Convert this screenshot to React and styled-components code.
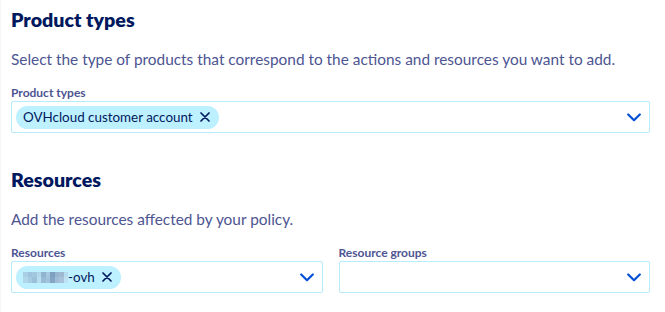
import React from "react";
import styled, { createGlobalStyle } from "styled-components";

const GlobalStyle = createGlobalStyle`
  html, body {
    margin: 0;
    padding: 0;
    background: #ffffff;
  }
  body {
    font-family: Lato, "Liberation Sans", sans-serif;
    color: #4d5592;
  }
`;

const Page = styled.div`
  width: 665px;
  height: 312px;
  box-sizing: border-box;
  padding: 7px 15px 0 10px;
  border-left: 1px solid #f6f6f6;
  overflow: hidden;
`;

const Section = styled.section`
  margin-bottom: ${(p) => p.gap || 0}px;
`;

const Heading = styled.h2`
  margin: 0;
  font-size: 19.6px;
  line-height: 26px;
  font-weight: 800;
  color: #00185e;
`;

const Description = styled.p`
  margin: 15px 0 0;
  font-size: 15.4px;
  line-height: 22px;
  color: #4d5592;
`;

const Fields = styled.div`
  display: grid;
  grid-template-columns: ${(p) => (p.cols === 2 ? "1fr 1fr" : "1fr")};
  column-gap: 16px;
  margin-top: 16px;
`;

const Field = styled.div`
  display: flex;
  flex-direction: column;
`;

const Label = styled.label`
  font-size: 12px;
  line-height: 14px;
  font-weight: 700;
  color: #4d5592;
  margin-bottom: 1px;
`;

const SelectBox = styled.div`
  box-sizing: border-box;
  height: 32px;
  border: 1px solid #b7ecfb;
  border-radius: 2px;
  display: flex;
  align-items: center;
  padding: 0 8px 0 4px;
  background: #ffffff;
`;

const Chips = styled.div`
  flex: 1;
  display: flex;
  align-items: center;
  gap: 4px;
`;

const Chip = styled.span`
  display: inline-flex;
  align-items: center;
  height: 23px;
  padding: 0 9px 0 7px;
  border-radius: 12px;
  background: #bef1ff;
  color: #00185e;
  font-size: 13.4px;
  gap: 7px;
`;

const Masked = styled.span`
  display: inline-flex;
  align-items: center;
`;

const Blur = styled.span`
  display: inline-grid;
  grid-template-columns: repeat(10, 4.5px);
  grid-template-rows: repeat(2, 5.5px);
`;

const Px = styled.span`
  background: ${(p) => p.c};
`;

const Chevron = styled.svg`
  flex: none;
  width: 14px;
  height: 9px;
`;

const blurColors = [
  "#a9cfe6", "#9ec4dd", "#a2c8e0", "#b2d8ec", "#8fb4d0", "#a7c9e0", "#7f9fc0", "#98b5d0", "#9eb8d2", "#b5dcef",
  "#b0d6ea", "#a6cbe2", "#9cc0da", "#b9def0", "#98bcd6", "#a3c3dc", "#86a5c5", "#a0bcd6", "#a8c2da", "#bde2f2",
];

function Close() {
  return (
    <svg width="10" height="10" viewBox="0 0 10 10">
      <path d="M1 1 L9 9 M9 1 L1 9" stroke="#00185e" strokeWidth="1.7" strokeLinecap="round" />
    </svg>
  );
}

function Down() {
  return (
    <Chevron viewBox="0 0 14 9">
      <path d="M1.2 1.5 L7 7.2 L12.8 1.5" fill="none" stroke="#0050d7" strokeWidth="2.2" strokeLinecap="round" strokeLinejoin="round" />
    </Chevron>
  );
}

function Select({ children }) {
  return (
    <SelectBox>
      <Chips>{children}</Chips>
      <Down />
    </SelectBox>
  );
}

export default function App() {
  return (
    <>
      <GlobalStyle />
      <Page>
        <Section gap={34}>
          <Heading>Product types</Heading>
          <Description>
            Select the type of products that correspond to the actions and resources you want to add.
          </Description>
          <Fields>
            <Field>
              <Label>Product types</Label>
              <Select>
                <Chip>
                  OVHcloud customer account <Close />
                </Chip>
              </Select>
            </Field>
          </Fields>
        </Section>
        <Section>
          <Heading>Resources</Heading>
          <Description>Add the resources affected by your policy.</Description>
          <Fields cols={2}>
            <Field>
              <Label>Resources</Label>
              <Select>
                <Chip>
                  <Masked>
                    <Blur>
                      {blurColors.map((c, i) => (
                        <Px key={i} c={c} />
                      ))}
                    </Blur>
                    -ovh
                  </Masked>
                  <Close />
                </Chip>
              </Select>
            </Field>
            <Field>
              <Label>Resource groups</Label>
              <Select />
            </Field>
          </Fields>
        </Section>
      </Page>
    </>
  );
}
